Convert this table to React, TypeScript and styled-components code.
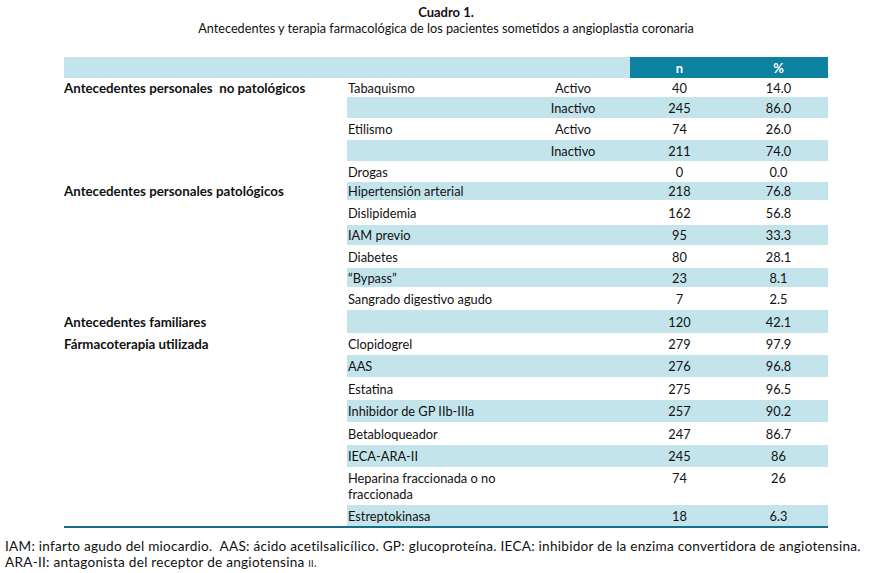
import React from "react";
import styled, { createGlobalStyle } from "styled-components";

const Global = createGlobalStyle`
  html, body { margin: 0; padding: 0; background: #fff; }
  body { font-family: Lato, "Open Sans", sans-serif; color: #111; }
`;

const light = "#c4e4ec";
const dark = "#0c81a0";

const Page = styled.div`
  width: 874px;
  height: 573px;
  overflow: hidden;
`;

const Caption = styled.div`
  width: 764px;
  margin-left: 64px;
  padding-top: 4px;
  text-align: center;
`;

const Title = styled.div`
  font-weight: 700;
  font-size: 13px;
  line-height: 16px;
`;

const Subtitle = styled.div`
  font-size: 12.7px;
  line-height: 16px;
`;

const Table = styled.div`
  width: 764px;
  margin: 21px 0 0 64px;
  border-bottom: 2px solid #17708a;
`;

const Row = styled.div<{ $h: number }>`
  display: grid;
  grid-template-columns: 283px 1fr;
  height: ${(p) => p.$h}px;
`;

const HeaderRow = styled.div`
  display: grid;
  grid-template-columns: 566px 99px 99px;
  height: 21px;
`;

const HeadBlank = styled.div`
  background: ${light};
`;

const HeadCell = styled.div`
  background: ${dark};
  color: #fff;
  font-weight: 700;
  font-size: 13px;
  display: flex;
  align-items: center;
  justify-content: center;
`;

const Group = styled.div`
  font-weight: 700;
  font-size: 13.3px;
  display: flex;
  align-items: center;
  white-space: nowrap;
`;

const Body = styled.div<{ $fill: boolean; $top: boolean }>`
  display: grid;
  grid-template-columns: 169px 114px 99px 99px;
  align-items: ${(p) => (p.$top ? "start" : "center")};
  background: ${(p) => (p.$fill ? light : "transparent")};
  font-size: 12.8px;
  line-height: 16px;
`;

const Item = styled.div<{ $top: boolean }>`
  padding-left: 1px;
  padding-top: ${(p) => (p.$top ? "3px" : "0")};
`;

const Centered = styled.div<{ $top: boolean }>`
  text-align: center;
  padding-top: ${(p) => (p.$top ? "3px" : "0")};
`;

const Footnote = styled.div`
  margin-top: 10px;
  padding-left: 5px;
  font-size: 13.6px;
  letter-spacing: 0.25px;
  line-height: 16px;
  white-space: nowrap;
`;

const Small = styled.span`
  font-size: 9px;
`;

const Red = styled.span`
  color: #d0312d;
`;

type R = {
  h: number;
  group?: string;
  item?: React.ReactNode;
  sub?: string;
  n: string;
  p: string;
  fill?: boolean;
  top?: boolean;
};

const rows: R[] = [
  { h: 19, group: "Antecedentes personales\u00a0 no patológicos", item: "Tabaquismo", sub: "Activo", n: "40", p: "14.0" },
  { h: 21, sub: "Inactivo", n: "245", p: "86.0", fill: true },
  { h: 22, item: "Etilismo", sub: "Activo", n: "74", p: "26.0" },
  { h: 21, sub: "Inactivo", n: "211", p: "74.0", fill: true },
  { h: 21, item: "Drogas", n: "0", p: "0.0" },
  { h: 18, group: "Antecedentes personales patológicos", item: "Hipertensión arterial", n: "218", p: "76.8", fill: true },
  { h: 25, item: "Dislipidemia", n: "162", p: "56.8" },
  { h: 20, item: "IAM previo", n: "95", p: "33.3", fill: true },
  { h: 23, item: "Diabetes", n: "80", p: "28.1" },
  { h: 19, item: "\u201cBypass\u201d", n: "23", p: "8.1", fill: true },
  { h: 23, item: "Sangrado digestivo agudo", n: "7", p: "2.5" },
  { h: 23, group: "Antecedentes familiares", n: "120", p: "42.1", fill: true },
  { h: 22, group: "Fármacoterapia utilizada", item: "Clopidogrel", n: "279", p: "97.9" },
  { h: 22, item: "AAS", n: "276", p: "96.8", fill: true },
  { h: 23, item: "Estatina", n: "275", p: "96.5" },
  { h: 22, item: "Inhibidor de GP IIb-IIIa", n: "257", p: "90.2", fill: true },
  { h: 23, item: "Betabloqueador", n: "247", p: "86.7" },
  { h: 22, item: "IECA-ARA-II", n: "245", p: "86", fill: true },
  { h: 38, item: "Heparina fraccionada o no fraccionada", n: "74", p: "26", top: true },
  { h: 21, item: "Estreptokinasa", n: "18", p: "6.3", fill: true },
];

export default function App() {
  return (
    <Page>
      <Global />
      <Caption>
        <Title>Cuadro 1.</Title>
        <Subtitle>
          Antecedentes y terapia farmacológica de los pacientes sometidos a angioplastia coronaria
        </Subtitle>
      </Caption>
      <Table>
        <HeaderRow>
          <HeadBlank />
          <HeadCell>n</HeadCell>
          <HeadCell>%</HeadCell>
        </HeaderRow>
        {rows.map((r, i) => (
          <Row key={i} $h={r.h}>
            <Group>{r.group ?? ""}</Group>
            <Body $fill={!!r.fill} $top={!!r.top}>
              <Item $top={!!r.top}>{r.item ?? ""}</Item>
              <Centered $top={!!r.top}>{r.sub ?? ""}</Centered>
              <Centered $top={!!r.top}>{r.n}</Centered>
              <Centered $top={!!r.top}>{r.p}</Centered>
            </Body>
          </Row>
        ))}
      </Table>
      <Footnote>
        IAM: infarto agudo del miocardio.&nbsp; AAS: ácido acetilsalicílico. GP: glucoproteína. IECA: inhibidor de la enzima convertidora de angiotensina.
        <br />
        ARA-II: antagonista del receptor de angiotensina <Small>II</Small>
        <Red>.</Red>
      </Footnote>
    </Page>
  );
}
